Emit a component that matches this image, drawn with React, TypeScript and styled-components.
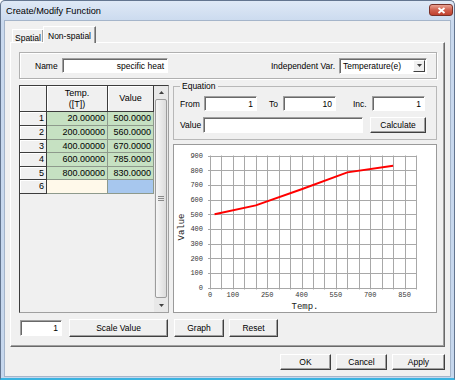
import { Fragment } from 'react';
import styled, { createGlobalStyle } from 'styled-components';

const GlobalStyle = createGlobalStyle`
  * { box-sizing: border-box; }
  body {
    margin: 0;
    background: #ffffff;
    font-family: "Liberation Sans", Arial, sans-serif;
    color: #000;
  }
`;

const rows = [
  { temp: 20, value: 500 },
  { temp: 200, value: 560 },
  { temp: 400, value: 670 },
  { temp: 600, value: 785 },
  { temp: 800, value: 830 },
];

const Window = styled.div`
  width: 455px;
  height: 380px;
  display: flex;
  flex-direction: column;
  border: 1px solid #63758f;
  border-bottom: 2px solid #3ab3e0;
  border-radius: 5px 5px 0 0;
  background: linear-gradient(#dfe9f6, #c9d9ee 22px, #c6d7ed);
  padding: 0 3px 1px;
`;

const TitleBar = styled.div`
  height: 19px;
  display: flex;
  align-items: center;
  justify-content: space-between;
  padding-left: 2px;
  font-size: 9.2px;
`;

const CloseButton = styled.div`
  align-self: flex-start;
  margin: 3px -2px 0 0;
  width: 24px;
  height: 12px;
  display: flex;
  align-items: center;
  justify-content: center;
  border: 1px solid #7a3128;
  border-radius: 3px;
  background: linear-gradient(#e9a293, #d0614f 50%, #c0402e);
`;

const Client = styled.div`
  flex: 1;
  display: flex;
  flex-direction: column;
  background: #f0f0f0;
  border: 1px solid #a5b5ca;
  padding: 5px 5px 0;
  font-size: 8.5px;
`;

const TabStrip = styled.div`
  height: 17px;
  display: flex;
  align-items: flex-end;
  padding-left: 2px;
`;

const Tab = styled.div<{ $active?: boolean; $w: number }>`
  position: relative;
  z-index: ${p => (p.$active ? 1 : 0)};
  width: ${p => p.$w}px;
  height: ${p => (p.$active ? 17 : 13)}px;
  margin-bottom: ${p => (p.$active ? 0 : 1)}px;
  margin-left: ${p => (p.$active ? -1 : 0)}px;
  padding-top: ${p => (p.$active ? 4 : 3)}px;
  text-align: center;
  background: #f0f0f0;
  border: 1px solid;
  border-bottom: none;
  border-color: #ffffff #6d6d6d transparent #ffffff;
  box-shadow: inset -1px 0 0 #a0a0a0;
`;

const Panel = styled.div`
  margin-top: -1px;
  height: 305px;
  display: flex;
  flex-direction: column;
  border: 1px solid;
  border-color: #ffffff #696969 #696969 #ffffff;
  box-shadow: inset -1px -1px 0 #a0a0a0;
  padding: 9px 7px 0 8px;
`;

const NameGroup = styled.div`
  height: 27px;
  display: flex;
  align-items: center;
  padding: 0 9px 0 15px;
  border: 1px solid #b0b0b0;
  box-shadow: inset 1px 1px 0 #fff, 1px 1px 0 #fff;
`;

const Label = styled.span<{ $w?: number; $gap?: number }>`
  flex: none;
  width: ${p => (p.$w ? `${p.$w}px` : 'auto')};
  margin-left: ${p => (p.$gap === undefined ? '0' : p.$gap < 0 ? 'auto' : `${p.$gap}px`)};
  margin-right: ${p => (p.$w ? 0 : 4)}px;
  white-space: nowrap;
`;

const TextBox = styled.div<{ $w: number; $h?: number; $gap?: number }>`
  flex: none;
  width: ${p => p.$w}px;
  height: ${p => p.$h ?? 15}px;
  margin-left: ${p => p.$gap ?? 0}px;
  display: flex;
  align-items: center;
  justify-content: flex-end;
  padding: 0 3px;
  background: #ffffff;
  border: 1px solid;
  border-color: #a0a0a0 #ffffff #ffffff #a0a0a0;
  box-shadow: inset 1px 1px 0 #696969;
  white-space: nowrap;
`;

const SelectBox = styled.div`
  width: 88px;
  height: 16px;
  display: flex;
  align-items: center;
  justify-content: space-between;
  padding: 0 1px 0 3px;
  background: #ffffff;
  border: 1px solid;
  border-color: #a0a0a0 #ffffff #ffffff #a0a0a0;
  box-shadow: inset 1px 1px 0 #696969;
`;

const DropButton = styled.span`
  width: 12px;
  height: 12px;
  display: flex;
  align-items: center;
  justify-content: center;
  background: #f0f0f0;
  border: 1px solid;
  border-color: #ffffff #404040 #404040 #ffffff;
`;

const BodyRow = styled.div`
  margin-top: 2px;
  height: 232px;
  display: flex;
  gap: 4px;
`;

const TableBox = styled.div`
  margin-top: 4px;
  width: 150px;
  height: 228px;
  display: flex;
  background: #f0f0f0;
  border: 1px solid;
  border-color: #3c3c3c #a0a0a0 #a0a0a0 #3c3c3c;
`;

const Grid = styled.div`
  flex: 1;
  display: grid;
  grid-template-columns: 27px 61px 46px;
  grid-template-rows: 26px 14px 14px 13px 14px 13px 14px;
  align-content: start;
  font-size: 9px;
`;

type CellKind = 'head' | 'data' | 'cream' | 'blue';

const cellBg: Record<CellKind, string> = {
  head: '#f0f0f0',
  data: '#c6e1c2',
  cream: '#fff9ea',
  blue: '#a7c7ee',
};

const Cell = styled.div<{ $kind: CellKind; $center?: boolean }>`
  display: flex;
  flex-direction: column;
  align-items: ${p => (p.$center ? 'center' : 'flex-end')};
  justify-content: center;
  padding: 0 2px;
  line-height: 11px;
  background: ${p => cellBg[p.$kind]};
  border-right: 1px solid ${p => (p.$kind === 'head' ? '#3c3c3c' : '#8e9a8c')};
  border-bottom: 1px solid ${p => (p.$kind === 'head' ? '#3c3c3c' : '#8e9a8c')};
  box-shadow: ${p => (p.$kind === 'head' ? 'inset 1px 1px 0 #ffffff' : 'none')};
`;

const ScrollBar = styled.div`
  width: 14px;
  display: flex;
  flex-direction: column;
  background: #e8e8e8;
`;

const ScrollArrow = styled.div<{ $h: number }>`
  height: ${p => p.$h}px;
  display: flex;
  align-items: center;
  justify-content: center;
`;

const Thumb = styled.div`
  flex: 1;
  margin: 0 1px;
  display: flex;
  align-items: center;
  justify-content: center;
  border: 1px solid #9c9c9c;
  border-radius: 2px;
  background: linear-gradient(to right, #f6f6f6, #dcdcdc);
`;

const RightCol = styled.div`
  width: 264px;
  display: flex;
  flex-direction: column;
`;

const Group = styled.fieldset`
  margin: 0;
  min-width: 0;
  height: 59px;
  padding: 0 6px;
  border: 1px solid #b8b8b8;
`;

const Legend = styled.legend`
  padding: 0 2px;
  line-height: 10px;
`;

const FieldRow = styled.div<{ $top: number }>`
  margin-top: ${p => p.$top}px;
  display: flex;
  align-items: center;
`;

const ChartBox = styled.div`
  margin-top: 4px;
  height: 169px;
  background: #ffffff;
  border: 1px solid #9a9a9a;
`;

const ButtonRow = styled.div`
  margin-top: 6px;
  height: 18px;
  display: flex;
  align-items: center;
`;

const Button = styled.button<{ $w: number; $h?: number; $gap?: number }>`
  flex: none;
  width: ${p => p.$w}px;
  height: ${p => p.$h ?? 18}px;
  margin-left: ${p => p.$gap ?? 0}px;
  padding: 0;
  font: inherit;
  font-size: 8.5px;
  color: #000;
  background: #f0f0f0;
  border: 1px solid;
  border-color: #ffffff #404040 #404040 #ffffff;
  box-shadow: inset -1px -1px 0 #a0a0a0;
`;

const Footer = styled.div`
  margin-top: 7px;
  display: flex;
  justify-content: flex-end;
  gap: 5px;
`;

const Arrow = ({ down }: { down?: boolean }) => (
  <svg width="5" height="3" viewBox="0 0 5 3">
    <path d={down ? 'M0 0H5L2.5 3Z' : 'M0 3H5L2.5 0Z'} fill="#404040" />
  </svg>
);

const Grip = () => (
  <svg width="6" height="5" viewBox="0 0 6 5">
    <path d="M0 0.5H6M0 2.5H6M0 4.5H6" stroke="#8a8a8a" strokeWidth="1" />
  </svg>
);

const CW = 262;
const CH = 167;
const X0 = 36;
const X1 = 242;
const Y0 = 10.5;
const Y1 = 142.5;
const px = (v: number) => X0 + (v / 900) * (X1 - X0);
const py = (v: number) => Y1 - (v / 900) * (Y1 - Y0);
const crisp = (n: number) => Math.round(n) + 0.5;

const Chart = () => {
  const xs = Array.from({ length: 19 }, (_, i) => i * 50);
  const ys = Array.from({ length: 10 }, (_, i) => i * 100);
  const xLabels = [0, 100, 250, 400, 550, 700, 850];
  return (
    <svg width={CW} height={CH} viewBox={`0 0 ${CW} ${CH}`}>
      <g stroke="#a8a8a8" strokeWidth="1">
        {xs.map(v => (
          <line key={`x${v}`} x1={crisp(px(v))} x2={crisp(px(v))} y1={Y0} y2={Y1 + 2} />
        ))}
        {ys.map(v => (
          <line key={`y${v}`} x1={X0 - 2} x2={X1} y1={crisp(py(v))} y2={crisp(py(v))} />
        ))}
      </g>
      <g fontFamily='"Liberation Mono", monospace' fontSize="7" fill="#333">
        {ys.map(v => (
          <text key={`yl${v}`} x={29} y={py(v) + 2.5} textAnchor="end">
            {v}
          </text>
        ))}
        {xLabels.map(v => (
          <text key={`xl${v}`} x={px(v)} y={152} textAnchor="middle">
            {v}
          </text>
        ))}
      </g>
      <polyline
        points={rows.map(r => `${px(r.temp)},${py(r.value)}`).join(' ')}
        fill="none"
        stroke="#ff0000"
        strokeWidth="2"
      />
      <g fontFamily='"Liberation Mono", monospace' fontSize="9" fill="#222">
        <text x={10} y={82} textAnchor="middle" transform="rotate(-90 10 82)">
          Value
        </text>
        <text x={131} y={164} textAnchor="middle">
          Temp.
        </text>
      </g>
    </svg>
  );
};

const App = () => (
  <>
    <GlobalStyle />
    <Window>
      <TitleBar>
        <span>Create/Modify Function</span>
        <CloseButton>
          <svg width="9" height="7" viewBox="0 0 9 7">
            <path d="M1.5 1L7.5 6M7.5 1L1.5 6" stroke="#ffffff" strokeWidth="1.8" />
          </svg>
        </CloseButton>
      </TitleBar>
      <Client>
        <TabStrip>
          <Tab $w={32}>Spatial</Tab>
          <Tab $w={53} $active>
            Non-spatial
          </Tab>
        </TabStrip>
        <Panel>
          <NameGroup>
            <Label $w={27}>Name</Label>
            <TextBox $w={106}>specific heat</TextBox>
            <Label $gap={-1}>Independent Var.</Label>
            <SelectBox>
              <span>Temperature(e)</span>
              <DropButton>
                <Arrow down />
              </DropButton>
            </SelectBox>
          </NameGroup>

          <BodyRow>
            <TableBox>
              <Grid>
                <Cell $kind="head" />
                <Cell $kind="head" $center>
                  <span>Temp.</span>
                  <span>([T])</span>
                </Cell>
                <Cell $kind="head" $center>
                  Value
                </Cell>
                {rows.map((r, i) => (
                  <Fragment key={r.temp}>
                    <Cell $kind="head">{i + 1}</Cell>
                    <Cell $kind="data">{r.temp.toFixed(5)}</Cell>
                    <Cell $kind="data">{r.value.toFixed(4)}</Cell>
                  </Fragment>
                ))}
                <Cell $kind="head">6</Cell>
                <Cell $kind="cream" />
                <Cell $kind="blue" />
              </Grid>
              <ScrollBar>
                <ScrollArrow $h={13}>
                  <Arrow />
                </ScrollArrow>
                <Thumb>
                  <Grip />
                </Thumb>
                <ScrollArrow $h={14}>
                  <Arrow down />
                </ScrollArrow>
              </ScrollBar>
            </TableBox>

            <RightCol>
              <Group>
                <Legend>Equation</Legend>
                <FieldRow $top={5}>
                  <Label $w={24}>From</Label>
                  <TextBox $w={53}>1</TextBox>
                  <Label $w={14} $gap={12}>
                    To
                  </Label>
                  <TextBox $w={53}>10</TextBox>
                  <Label $w={19} $gap={17}>
                    Inc.
                  </Label>
                  <TextBox $w={53}>1</TextBox>
                </FieldRow>
                <FieldRow $top={6}>
                  <Label $w={23}>Value</Label>
                  <TextBox $w={160} $h={16} />
                  <Button $w={56} $h={16} $gap={7}>
                    Calculate
                  </Button>
                </FieldRow>
              </Group>
              <ChartBox>
                <Chart />
              </ChartBox>
            </RightCol>
          </BodyRow>

          <ButtonRow>
            <TextBox $w={42} $h={16} $gap={1}>
              1
            </TextBox>
            <Button $w={99} $gap={7}>
              Scale Value
            </Button>
            <Button $w={50} $gap={6}>
              Graph
            </Button>
            <Button $w={49} $gap={5}>
              Reset
            </Button>
          </ButtonRow>
        </Panel>
        <Footer>
          <Button $w={51} $h={16}>
            OK
          </Button>
          <Button $w={51} $h={16}>
            Cancel
          </Button>
          <Button $w={53} $h={16}>
            Apply
          </Button>
        </Footer>
      </Client>
    </Window>
  </>
);

export default App;
